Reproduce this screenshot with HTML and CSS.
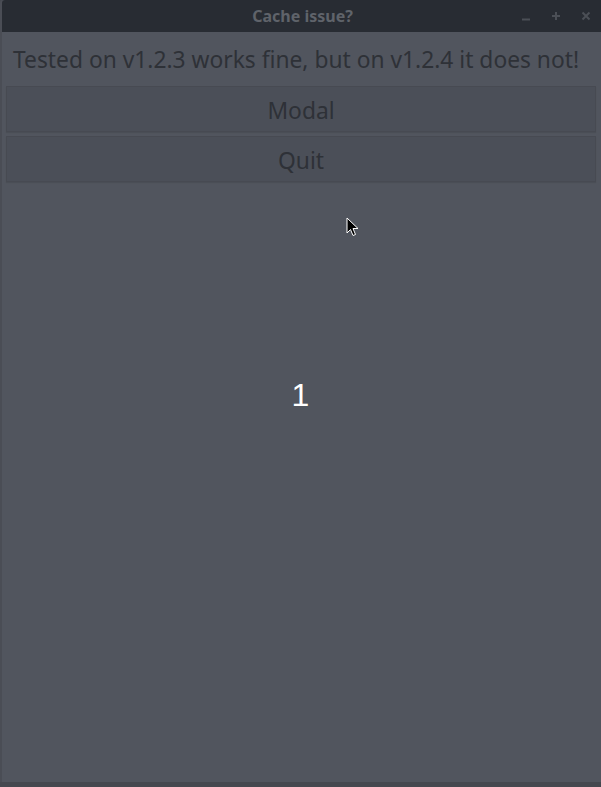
FILE: index.html
```html
<!DOCTYPE html>
<html>
<head>
<meta charset="utf-8">
<link rel="stylesheet" href="styles.css">
</head>
<body>
<div class="window">
  <div class="titlebar">
    <span class="title">Cache issue?</span>
    <div class="controls">
      <svg class="ctl" width="10" height="10" viewBox="0 0 10 10"><path d="M1 8.5H9" stroke="#4b4f56" stroke-width="2"/></svg>
      <svg class="ctl" width="10" height="10" viewBox="0 0 10 10"><path d="M1 5H9M5 1V9" stroke="#4b4f56" stroke-width="2"/></svg>
      <svg class="ctl" width="10" height="10" viewBox="0 0 10 10"><path d="M1.5 1.5L8.5 8.5M8.5 1.5L1.5 8.5" stroke="#4b4f56" stroke-width="2"/></svg>
    </div>
  </div>
  <div class="content">
    <div class="label">Tested on v1.2.3 works fine, but on v1.2.4 it does not!</div>
    <div class="buttons">
      <div class="btn">Modal</div>
      <div class="btn">Quit</div>
    </div>
    <div class="stage">
      <div class="count">1</div>
    </div>
  </div>
</div>
<svg class="cursor" width="14" height="20" viewBox="0 0 14 20"><path d="M1 1V16L4.5 12.5L7 18.5L9.5 17.5L7 11.5H12Z" fill="#000" stroke="#fff" stroke-width="1" stroke-linejoin="round"/></svg>
</body>
</html>
```
FILE: styles.css
```css
html, body {
  margin: 0;
  padding: 0;
}
body {
  background: #45484f;
  width: 601px;
  height: 787px;
  overflow: hidden;
  position: relative;
}
.window {
  margin-left: 2px;
  width: 599px;
  height: 782px;
  display: flex;
  flex-direction: column;
  background: #51555e;
  border-top-left-radius: 3px;
  overflow: hidden;
  box-shadow: -2px 0 0 #4a4d55;
}
.titlebar {
  height: 32px;
  flex: none;
  background: #282c33;
  display: flex;
  align-items: center;
  justify-content: center;
  position: relative;
}
.title {
  font-family: "Noto Sans", sans-serif;
  font-weight: bold;
  font-size: 16px;
  color: #5f636a;
  margin-left: 2px;
}
.controls {
  position: absolute;
  right: 10px;
  top: 11px;
  display: flex;
  gap: 20px;
}
.ctl {
  display: block;
}
.content {
  flex: 1;
  display: flex;
  flex-direction: column;
  font-family: "Noto Sans", sans-serif;
  color: #2e3137;
}
.label {
  font-size: 22.8px;
  line-height: 30px;
  padding: 13px 0 11px 11px;
  white-space: nowrap;
}
.buttons {
  display: flex;
  flex-direction: column;
  gap: 4px;
  padding: 0 5px 0 4px;
}
.btn {
  height: 41px;
  padding-top: 3px;
  background: #4b4f58;
  border: 1px solid #474a52;
  box-shadow: 0 1px 1px rgba(0,0,0,0.08);
  font-size: 22.8px;
  line-height: 41px;
  text-align: center;
}
.stage {
  flex: 1;
  display: flex;
  justify-content: center;
}
.count {
  margin-top: 195px;
  font-family: "Liberation Sans", sans-serif;
  font-size: 32px;
  color: #ffffff;
  height: 37px;
  margin-left: -2px;
}
.cursor {
  position: absolute;
  left: 346px;
  top: 217px;
}
```
